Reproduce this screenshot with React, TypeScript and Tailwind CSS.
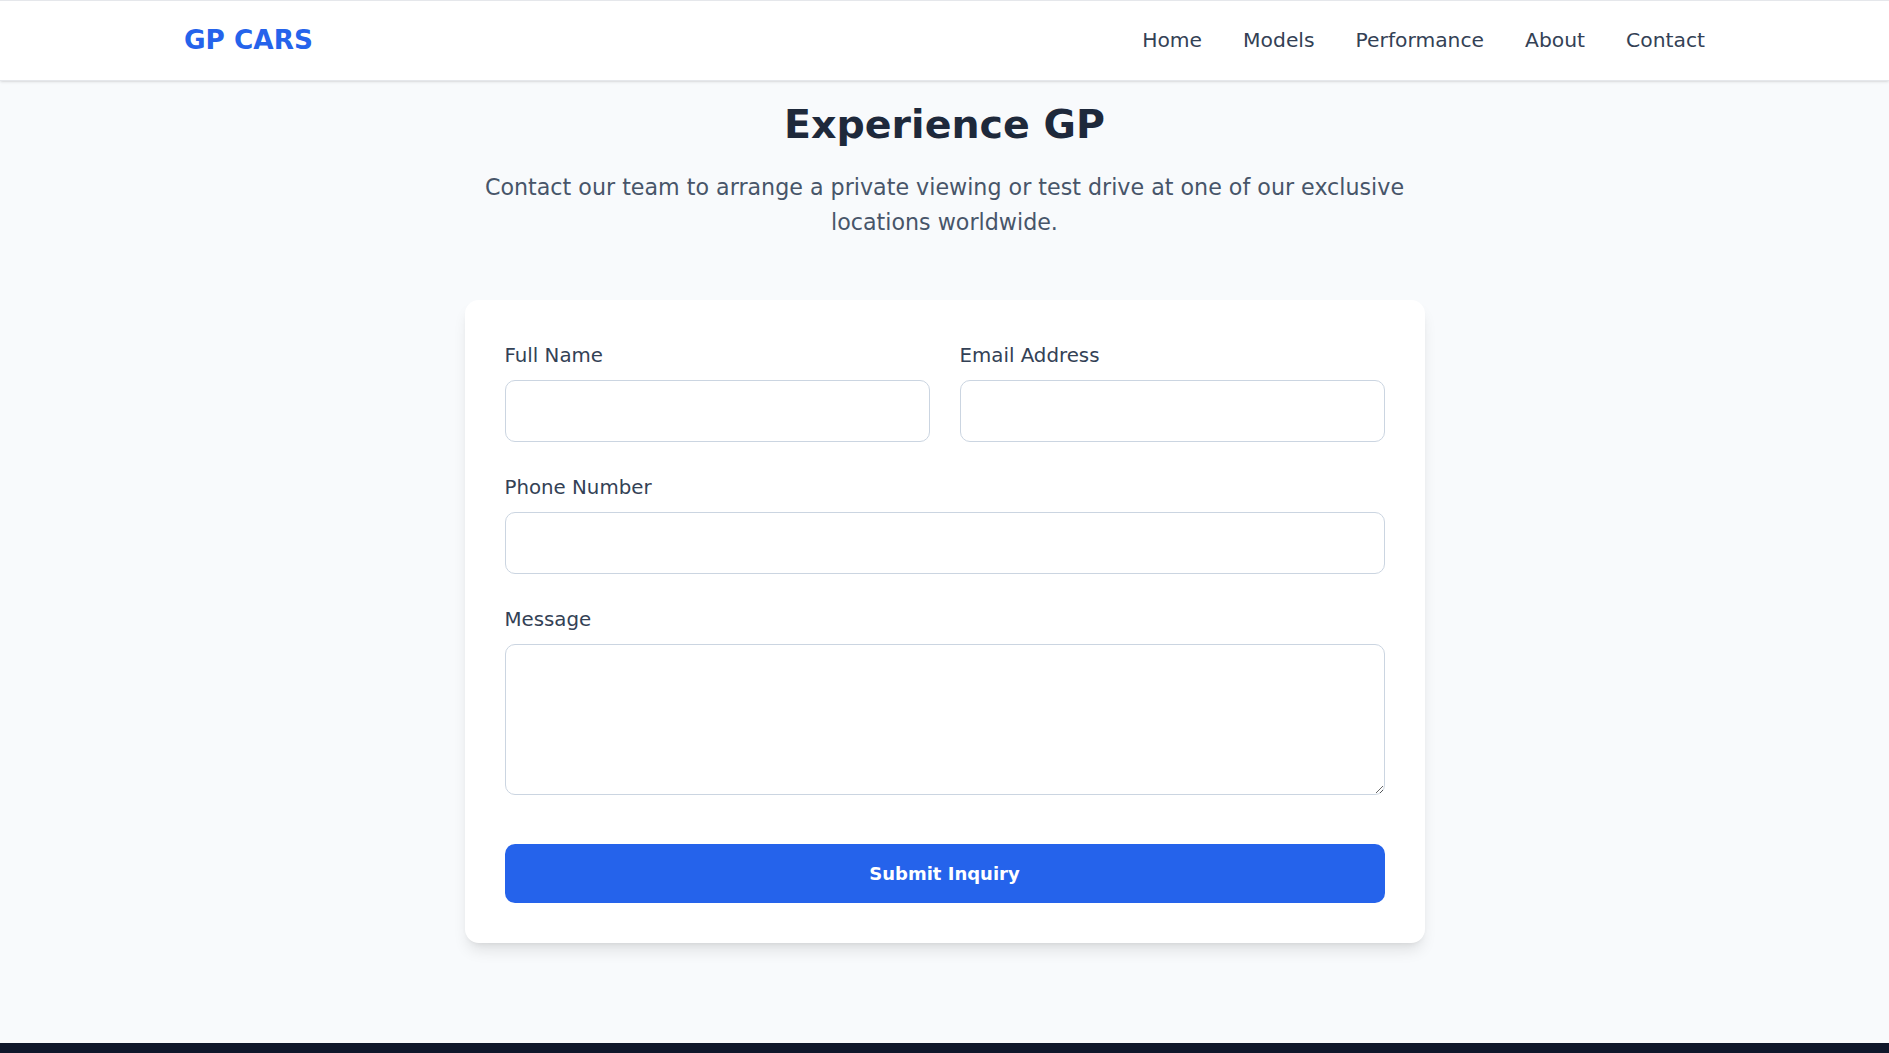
import React from 'react';

const navLinks = ['Home', 'Models', 'Performance', 'About', 'Contact'];

function Field({ label, children }: { label: string; children: React.ReactNode }) {
  return (
    <div className="flex flex-col">
      <label className="text-[19.8px] leading-[31px] text-[#334155] mb-[9px]">{label}</label>
      {children}
    </div>
  );
}

export default function App() {
  return (
    <div className="min-h-screen flex flex-col bg-[#f8fafc]" style={{ fontFamily: '"DejaVu Sans", "Noto Sans", sans-serif' }}>
      <header className="h-[81px] bg-white border-t border-b border-[#e5e7eb] shadow-sm">
        <div className="max-w-[1521px] h-full mx-auto flex items-center justify-between">
          <a href="#" className="text-[26.3px] font-bold text-[#2563eb]">GP CARS</a>
          <nav className="flex items-center gap-[41px]">
            {navLinks.map((link) => (
              <a key={link} href="#" className="text-[20.3px] text-[#334155]">{link}</a>
            ))}
          </nav>
        </div>
      </header>

      <main className="flex-1 pt-[19px]">
        <h1 className="text-center text-[39.5px] leading-[48px] font-bold text-[#1e293b]">Experience GP</h1>
        <p className="mt-[22px] max-w-[922px] mx-auto text-center text-[22.2px] leading-[35px] text-[#475569]">
          Contact our team to arrange a private viewing or test drive at one of our exclusive locations worldwide.
        </p>

        <form className="mt-[60px] w-[960px] mx-auto bg-white rounded-[14px] p-[40px] shadow-lg flex flex-col gap-[30px]">
          <div className="grid grid-cols-2 gap-x-[30px]">
            <Field label="Full Name">
              <input type="text" className="h-[62px] w-full rounded-[10px] border border-[#cbd5e1] bg-white px-4" />
            </Field>
            <Field label="Email Address">
              <input type="email" className="h-[62px] w-full rounded-[10px] border border-[#cbd5e1] bg-white px-4" />
            </Field>
          </div>
          <Field label="Phone Number">
            <input type="tel" className="h-[62px] w-full rounded-[10px] border border-[#cbd5e1] bg-white px-4" />
          </Field>
          <Field label="Message">
            <textarea className="block h-[151px] w-full rounded-[10px] border border-[#cbd5e1] bg-white px-4 py-3" />
          </Field>
          <button type="button" className="mt-[19px] h-[59px] w-full rounded-[10px] bg-[#2563eb] text-white text-[18px] font-bold">
            Submit Inquiry
          </button>
        </form>
      </main>

      <footer className="h-[10px] bg-[#0f172a]" />
    </div>
  );
}
